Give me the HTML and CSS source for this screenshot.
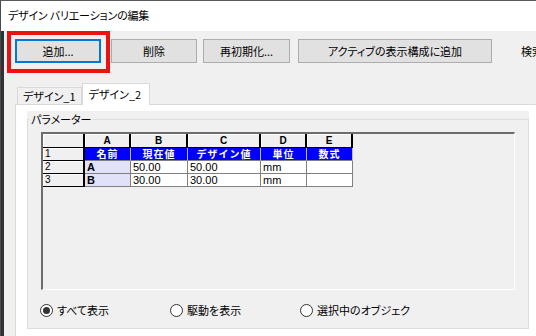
FILE: index.html
```html
<!DOCTYPE html>
<html lang="ja">
<head>
<meta charset="UTF-8">
<title>デザイン バリエーションの編集</title>
<link rel="stylesheet" href="styles.css">
</head>
<body>
<div class="window">
    <div class="titlebar">デザイン バリエーションの編集</div>
    <div class="client">
        <!-- 上のボタン列 -->
        <div class="toolbar">
            <button class="btn btn-add">追加...</button>
            <button class="btn btn-del">削除</button>
            <button class="btn btn-reset">再初期化...</button>
            <button class="btn btn-active">アクティブの表示構成に追加</button>
            <span class="search-label">検索</span>
        </div>
        <!-- タブ -->
        <div class="tabs">
            <div class="tab">デザイン_1</div>
            <div class="tab active">デザイン_2</div>
        </div>
        <div class="tabpage">
            <div class="panel">
                <div class="groupbox">
                    <span class="group-title">パラメーター</span>
                    <div class="grid">
                        <table>
                            <colgroup>
                                <col class="c-row"><col class="c-a"><col class="c-b"><col class="c-c"><col class="c-d"><col class="c-e">
                            </colgroup>
                            <tr class="r-head">
                                <th class="corner"></th>
                                <th>A</th><th>B</th><th>C</th><th>D</th><th>E</th>
                            </tr>
                            <tr>
                                <th class="rowhead">1</th>
                                <td class="title">名前</td>
                                <td class="title">現在値</td>
                                <td class="title">デザイン値</td>
                                <td class="title">単位</td>
                                <td class="title">数式</td>
                            </tr>
                            <tr>
                                <th class="rowhead">2</th>
                                <td class="name">A</td>
                                <td>50.00</td>
                                <td>50.00</td>
                                <td>mm</td>
                                <td></td>
                            </tr>
                            <tr>
                                <th class="rowhead">3</th>
                                <td class="name">B</td>
                                <td>30.00</td>
                                <td>30.00</td>
                                <td>mm</td>
                                <td></td>
                            </tr>
                        </table>
                    </div>
                    <div class="radios">
                        <label class="radio"><span class="dot checked"></span>すべて表示</label>
                        <label class="radio"><span class="dot"></span>駆動を表示</label>
                        <label class="radio"><span class="dot"></span>選択中のオブジェク</label>
                    </div>
                </div>
            </div>
        </div>
    </div>
    <!-- 赤い強調枠 -->
    <div class="highlight"></div>
</div>
</body>
</html>
```

FILE: styles.css
```css
/* 初期化 */
* {
    margin: 0;
    padding: 0;
    box-sizing: border-box;
}
body {
    width: 536px;
    height: 336px;
    overflow: hidden;
    background: #fff;
    font-family: "Noto Sans CJK JP", "Noto Sans", sans-serif;
    font-feature-settings: "palt";
    font-size: 11px;
    color: #000;
}
.window {
    position: relative;
    width: 536px;
    height: 336px;
    border-top: 1px solid #5a5a5a;
    border-left: 1px solid #4a4a4a;
    display: flex;
    flex-direction: column;
    overflow: hidden;
}
.titlebar {
    height: 30px;
    line-height: 29px;
    padding-left: 7px;
    background: #fff;
    letter-spacing: -0.2px;
}
.client {
    flex: 1;
    background: #f0f0f0;
    border-left: 3px solid #2e3136;
    display: flex;
    flex-direction: column;
    overflow: hidden;
}
/* ボタン列 */
.toolbar {
    display: flex;
    align-items: center;
    margin-top: 8px;
    height: 24px;
    padding-left: 11px;
    white-space: nowrap;
}
.btn {
    flex-shrink: 0;
    height: 24px;
    background: #e1e1e1;
    border: 1px solid #adadad;
    font-family: inherit;
    font-feature-settings: "palt";
    font-size: 11px;
    color: #000;
    text-align: center;
}
.btn-add {
    width: 86px;
    border: 2px solid #0078d7;
}
.btn-del {
    width: 86px;
    margin-left: 10px;
}
.btn-reset {
    width: 87px;
    margin-left: 6px;
}
.btn-active {
    width: 194px;
    margin-left: 8px;
}
.search-label {
    flex-shrink: 0;
    margin-left: 29px;
}
/* タブ */
.tabs {
    display: flex;
    align-items: flex-end;
    margin-top: 20px;
    padding-left: 13px;
    height: 21px;
}
.tab {
    height: 17px;
    line-height: 16px;
    padding: 0 5px 0 5px;
    border: 1px solid #d9d9d9;
    border-bottom: none;
    background: #f0f0f0;
    white-space: nowrap;
}
.tab.active {
    position: relative;
    z-index: 1;
    height: 22px;
    margin-bottom: -1px;
    padding: 0 8px 0 6px;
    line-height: 20px;
    background: #fff;
}
.tabpage {
    flex: 1;
    margin-left: 11px;
    border-left: 1px solid #d9d9d9;
    border-top: 1px solid #d9d9d9;
    background: #fff;
    padding: 6px 0 0 11px;
}
.panel {
    width: 502px;
    height: 218px;
    background: #f0f0f0;
    padding-top: 8px;
}
.groupbox {
    position: relative;
    width: 502px;
    height: 210px;
    border: 1px solid #dcdcdc;
}
.group-title {
    position: absolute;
    left: 1px;
    top: -8px;
    padding: 0 2px;
    line-height: 14px;
    background: #f0f0f0;
}
/* 表 */
.grid {
    margin: 12px 0 0 13px;
    width: 474px;
    height: 158px;
    border-top: 2px solid #6d6d6d;
    border-left: 2px solid #6d6d6d;
    border-right: 1px solid #fff;
    border-bottom: 1px solid #fff;
}
table {
    border-collapse: separate;
    border-spacing: 0;
    table-layout: fixed;
    width: 310px;
    font-family: "Liberation Sans", Arial, sans-serif;
    font-size: 11px;
    font-feature-settings: normal;
}
.c-row { width: 42px; }
.c-a { width: 46px; }
.c-b { width: 57px; }
.c-c { width: 73px; }
.c-d { width: 46px; }
.c-e { width: 46px; }
tr { height: 13px; }
tr.r-head { height: 14px; }
th {
    background: #f0f0f0;
    border-right: 2px solid #000;
    border-bottom: 1px solid #000;
    box-shadow: inset 1px 1px 0 #fff;
    font-weight: bold;
    font-size: 10px;
    text-align: center;
    line-height: 12px;
    padding: 0;
}
th.rowhead {
    font-weight: normal;
    text-align: left;
    padding-left: 2px;
}
td {
    background: #fff;
    border-right: 1px solid #808080;
    border-bottom: 1px solid #808080;
    padding: 0 0 0 2px;
    line-height: 12px;
    height: 13px;
    white-space: nowrap;
}
td.title {
    background: #0000ff;
    color: #fff;
    border-right: 1px solid #b8b8ff;
    border-bottom: 1px solid #808080;
    font-family: "Noto Sans CJK JP", sans-serif;
    font-size: 10px;
    font-weight: bold;
    letter-spacing: 1px;
    line-height: 12px;
    text-align: center;
    padding: 0;
}
td.name {
    background: #e1e1fa;
    font-weight: bold;
}
/* ラジオボタン */
.radios {
    display: flex;
    margin: 14px 0 0 12px;
    height: 13px;
}
.radio {
    width: 130px;
    display: flex;
    align-items: center;
    gap: 4px;
    white-space: nowrap;
    line-height: 13px;
}
.radio:last-child {
    width: auto;
}
.dot {
    width: 13px;
    height: 13px;
    border: 1px solid #333;
    border-radius: 50%;
    background: #fff;
    position: relative;
}
.dot.checked::after {
    content: "";
    position: absolute;
    left: 2px;
    top: 2px;
    width: 7px;
    height: 7px;
    border-radius: 50%;
    background: #333;
}
/* 赤い強調枠 */
.highlight {
    position: absolute;
    left: 6px;
    top: 30px;
    width: 103px;
    height: 42px;
    border: 4px solid #ee1111;
}
```
